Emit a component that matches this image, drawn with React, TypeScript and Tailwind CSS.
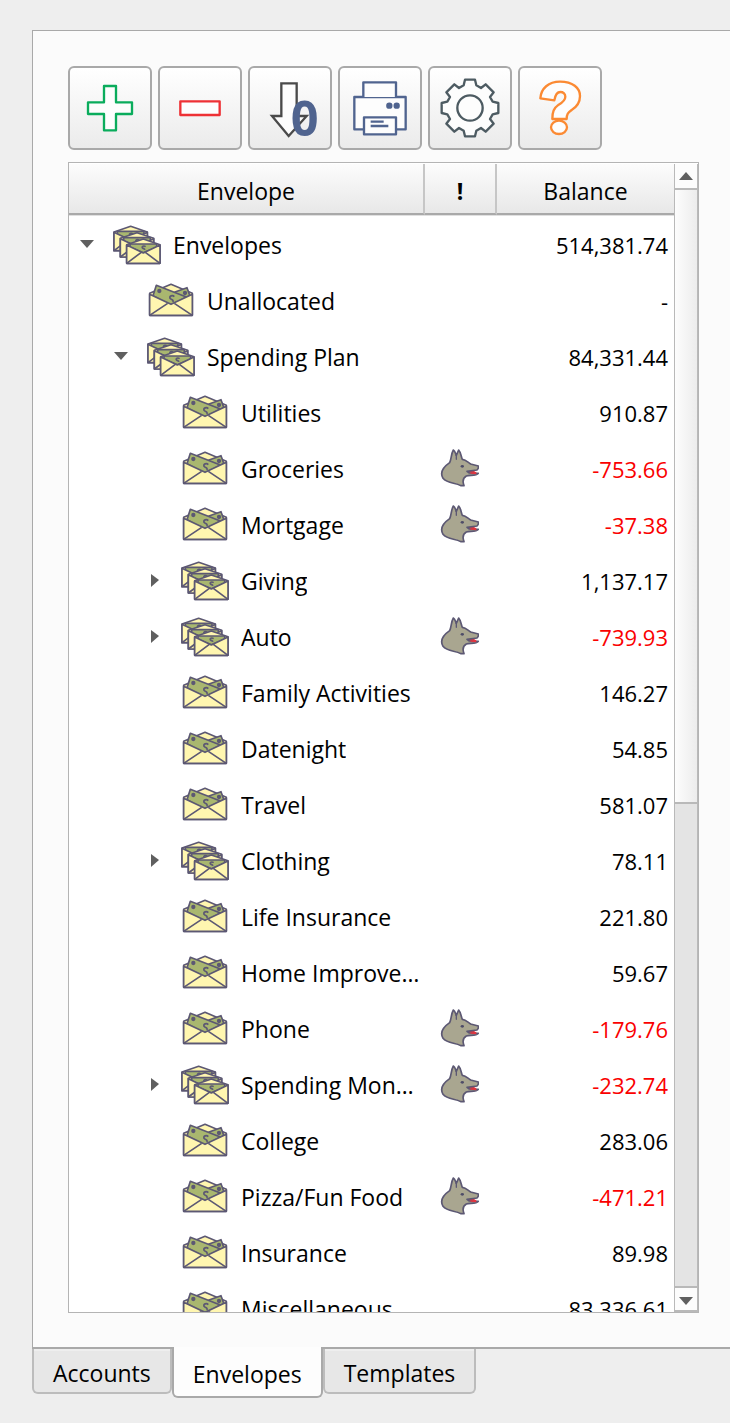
import React from 'react';
import clsx from 'clsx';

type Row = {
  name: string;
  balance: string;
  level: 0 | 1 | 2;
  group?: boolean;
  open?: boolean;
  alert?: boolean;
};

const rows: Row[] = [
  { name: 'Envelopes', balance: '514,381.74', level: 0, group: true, open: true },
  { name: 'Unallocated', balance: '-', level: 1 },
  { name: 'Spending Plan', balance: '84,331.44', level: 1, group: true, open: true },
  { name: 'Utilities', balance: '910.87', level: 2 },
  { name: 'Groceries', balance: '-753.66', level: 2, alert: true },
  { name: 'Mortgage', balance: '-37.38', level: 2, alert: true },
  { name: 'Giving', balance: '1,137.17', level: 2, group: true },
  { name: 'Auto', balance: '-739.93', level: 2, group: true, alert: true },
  { name: 'Family Activities', balance: '146.27', level: 2 },
  { name: 'Datenight', balance: '54.85', level: 2 },
  { name: 'Travel', balance: '581.07', level: 2 },
  { name: 'Clothing', balance: '78.11', level: 2, group: true },
  { name: 'Life Insurance', balance: '221.80', level: 2 },
  { name: 'Home Improve…', balance: '59.67', level: 2 },
  { name: 'Phone', balance: '-179.76', level: 2, alert: true },
  { name: 'Spending Mon…', balance: '-232.74', level: 2, group: true, alert: true },
  { name: 'College', balance: '283.06', level: 2 },
  { name: 'Pizza/Fun Food', balance: '-471.21', level: 2, alert: true },
  { name: 'Insurance', balance: '89.98', level: 2 },
  { name: 'Miscellaneous', balance: '83,336.61', level: 2 },
];

const indents = ['pl-0', 'pl-[34px]', 'pl-[68px]'];

const EnvelopeIcon = () => (
  <svg viewBox="0 0 144 114" className="h-[38px] w-12" stroke="#5c5873" strokeWidth="5" strokeLinejoin="round">
    <path d="M8 34 72 7l64 27v66H8z" fill="#fff6b0" />
    <path d="m84 30 36-13 8 23-45 30z" fill="#a9b76f" />
    <path d="m28 10 90 35-46 26-54-30z" fill="#a9b76f" />
    <circle cx="37" cy="27" r="4" fill="#5c5873" />
    <circle cx="114" cy="33" r="4" fill="#5c5873" />
    <path d="M82 44c-6-6-15-2-13 5 4 5 11 2 9 11" fill="none" />
    <path d="M8 37v63h128V37L72 67z" fill="#fff6b0" />
    <path d="m8 100 54-36m74 36L82 64" fill="none" />
  </svg>
);

const StackedEnvelope = ({ transform }: { transform?: string }) => (
  <g transform={transform}>
    <path d="M3 21 53 4l50 17v56H3z" fill="#fff6b0" />
    <path d="M13 19h80v10L53 45 13 29z" fill="#a9b76f" />
    <path d="M60 27c-6-4-12-1-10 3 3 4 8 2 7 7" fill="none" />
    <path d="M3 22v55h100V22L53 46z" fill="#fff6b0" />
    <path d="m3 77 44-33m56 33L59 44" fill="none" />
  </g>
);

const EnvelopeStackIcon = () => (
  <svg viewBox="0 0 144 120" className="h-10 w-12" stroke="#5c5873" strokeWidth="5" strokeLinejoin="round">
    <StackedEnvelope />
    <StackedEnvelope transform="translate(19 19)" />
    <StackedEnvelope transform="translate(38 38)" />
  </svg>
);

const WolfIcon = () => (
  <svg viewBox="0 0 120 126" className="mb-1 ml-3.5 h-[42px] w-10" strokeLinejoin="round" strokeLinecap="round">
    <path d="m84 74 22-1 3 10-22-1z" fill="#e5343f" />
    <path
      d="M65 119C50 109 26 114 12 97 1 78 16 61 32 50c5-10 4-26 11-38 6 3 6 10 9 16l7-16c7 7 7 20 11 28 10 1 16 8 25 14l23 6c2 6-1 9-4 12l-30 4 7 5 27 1c-6 8-24 5-36 8-9 5-12 16-7 29z"
      fill="#a9a690"
      stroke="#5c5873"
      strokeWidth="5"
    />
    <path d="m92 80 20-3v8l-16-2z" fill="#e5343f" />
    <ellipse cx="70" cy="61" rx="5" ry="4" fill="#4e4c68" />
    <path d="M52 28v12" stroke="#5c5873" strokeWidth="4" />
  </svg>
);

const tools = [
  {
    label: 'Add',
    icon: <path d="M102 54h36v49h48v35h-48v49h-36v-49H54v-35h48z" stroke="#0aac5c" />,
  },
  {
    label: 'Remove',
    icon: <path d="M61 100h118v41H61z" stroke="#ee3135" />,
  },
  {
    label: 'Zero out',
    icon: (
      <>
        <path d="M94 46h46v98h30l-54 60-50-60h28z" stroke="#4a4a4a" strokeLinejoin="miter" />
        <text x="164" y="204" textAnchor="middle" fontSize="146" fontWeight="700" fill="#50648f" stroke="none">
          0
        </text>
      </>
    ),
  },
  {
    label: 'Print',
    icon: (
      <g stroke="#50648f">
        <path d="M43 87h154v97H43z" />
        <path d="M70 87V43h98v44M72 148h96v51H72z" />
        <path d="M92 161h39M92 174h53" />
        <circle cx="148" cy="113" r="6" fill="#50648f" />
        <circle cx="170" cy="113" r="6" fill="#50648f" />
      </g>
    ),
  },
  {
    label: 'Settings',
    icon: (
      <g stroke="#4d5b62">
        <path d="M105 35h30l4 17 14 8 14-11 24 24-11 14 8 14 17 4v30l-17 4-8 14 11 14-24 24-14-11-14 8-4 17h-30l-4-17-14-8-14 11-24-24 11-14-8-14-17-4v-30l17-4 8-14-11-14 24-24 14 11 14-8z" />
        <circle cx="120" cy="120" r="38" />
      </g>
    ),
  },
  {
    label: 'Help',
    icon: (
      <g stroke="#fb8a33">
        <path d="M61 91c2-30 25-50 59-50 38 0 60 18 60 43 0 24-12 34-25 42-11 8-15 12-15 27H97c0-22 4-32 19-43 13-8 20-14 20-24 0-9-7-14-15-14-10 0-15 8-18 25z" />
        <ellipse cx="117" cy="178" rx="24" ry="20" />
      </g>
    ),
  },
];

const Toolbar = () => (
  <div className="flex flex-wrap gap-1.5">
    {tools.map((tool) => (
      <button
        key={tool.label}
        aria-label={tool.label}
        className="h-21 w-21 rounded-md border-2 border-[#a9a9a9] bg-linear-to-b from-white to-[#ebebeb]"
      >
        <svg viewBox="0 0 240 240" className="h-20 w-20 overflow-visible" fill="#fdfdfd" strokeWidth="7" strokeLinejoin="round">
          {tool.icon}
        </svg>
      </button>
    ))}
  </div>
);

const Arrow = ({ open }: { open?: boolean }) => (
  <button aria-label={open ? 'Collapse' : 'Expand'} className="flex h-8 w-9 shrink-0 items-center justify-center">
    <svg viewBox="0 0 14 14" className="h-3.5 w-3.5" fill="#5f5f5f">
      {open ? <path d="M0 2h14L7 10z" /> : <path d="M3 0v13l8-7z" />}
    </svg>
  </button>
);

const HeaderCell = ({ children, last }: { children: React.ReactNode; last?: boolean }) => (
  <th scope="col" className="h-[53px] p-0 align-top font-normal">
    <div
      className={clsx(
        'flex h-[51px] items-center justify-center border-b-2 border-b-[#a9a9a9] bg-linear-to-b from-[#fcfcfc] to-[#e8e8e8] pt-1 shadow-[0_1px_0_#e0e0e0]',
        !last && 'border-r-2 border-r-[#c6c6c6]'
      )}
    >
      {children}
    </div>
  </th>
);

const EnvelopeTable = () => (
  <table className="w-full table-fixed border-separate border-spacing-0">
    <colgroup>
      <col />
      <col className="w-[72px]" />
      <col className="w-[177px]" />
    </colgroup>
    <thead>
      <tr>
        <HeaderCell>Envelope</HeaderCell>
        <HeaderCell>
          <span className="font-bold">!</span>
        </HeaderCell>
        <HeaderCell last>Balance</HeaderCell>
      </tr>
    </thead>
    <tbody>
      {rows.map((row) => (
        <tr key={row.name} className="h-14">
          <td className="p-0">
            <div className={clsx('flex items-center', indents[row.level])}>
              {row.group ? <Arrow open={row.open} /> : <span className="w-9 shrink-0" />}
              <span className="ml-2 shrink-0">{row.group ? <EnvelopeStackIcon /> : <EnvelopeIcon />}</span>
              <span className="ml-3 truncate">{row.name}</span>
            </div>
          </td>
          <td className="p-0">{row.alert && <WolfIcon />}</td>
          <td className={clsx('p-0 pr-1.5 text-right text-[22px]', row.alert && 'text-[#fa0000]')}>{row.balance}</td>
        </tr>
      ))}
    </tbody>
  </table>
);

const ScrollBar = () => (
  <div className="flex w-6 shrink-0 flex-col border-x border-[#b9b9b9] bg-[#e4e4e4]">
    <button aria-label="Scroll up" className="flex h-[26px] shrink-0 items-center justify-center border-b-2 border-[#b9b9b9] bg-[#fcfcfc]">
      <svg viewBox="0 0 14 8" className="h-2 w-3.5" fill="#5f5f5f">
        <path d="M0 8h14L7 0z" />
      </svg>
    </button>
    <div className="min-h-0 flex-1">
      <div className="h-[56%] border-b-2 border-[#b9b9b9] bg-linear-to-r from-[#fdfdfd] to-[#ececec]" />
    </div>
    <button aria-label="Scroll down" className="flex h-[26px] shrink-0 items-center justify-center border-y-2 border-[#b9b9b9] bg-[#fcfcfc] pt-1">
      <svg viewBox="0 0 14 8" className="h-2 w-3.5" fill="#5f5f5f">
        <path d="M0 0h14L7 8z" />
      </svg>
    </button>
  </div>
);

const tabs = ['Accounts', 'Envelopes', 'Templates'];

const Tabs = () => (
  <div role="tablist" className="flex h-12 items-start">
    {tabs.map((tab) => {
      const active = tab === 'Envelopes';
      return (
        <button
          key={tab}
          role="tab"
          aria-selected={active}
          className={clsx(
            'rounded-b-md border-2 border-t-0 px-[19px]',
            active
              ? 'relative -mt-0.5 h-[51px] border-[#a9a9a9] bg-[#fdfdfd] pt-1'
              : 'h-[45px] border-[#bcbcbc] bg-[#e7e7e7] pt-1 shadow-[inset_0_2px_0_#eee]'
          )}
        >
          {tab}
        </button>
      );
    })}
  </div>
);

const App = () => {
  return (
    <div className="flex h-screen flex-col bg-[#eeeeee] pt-[30px] pb-[26px] pl-8 font-['Open_Sans','Noto_Sans',sans-serif] text-[23px] leading-8 text-black">
      <main className="flex min-h-0 flex-1 flex-col border-t border-b-2 border-l border-[#a9a9a9] bg-[#fbfbfb] pt-[35px] pr-[31px] pb-[34px] pl-[35px]">
        <Toolbar />
        <div className="mt-3 flex min-h-0 flex-1 overflow-hidden border border-[#b4b4b4] bg-white pt-px">
          <div className="min-w-0 flex-1 overflow-hidden">
            <EnvelopeTable />
          </div>
          <ScrollBar />
        </div>
      </main>
      <Tabs />
    </div>
  );
};

export default App;
